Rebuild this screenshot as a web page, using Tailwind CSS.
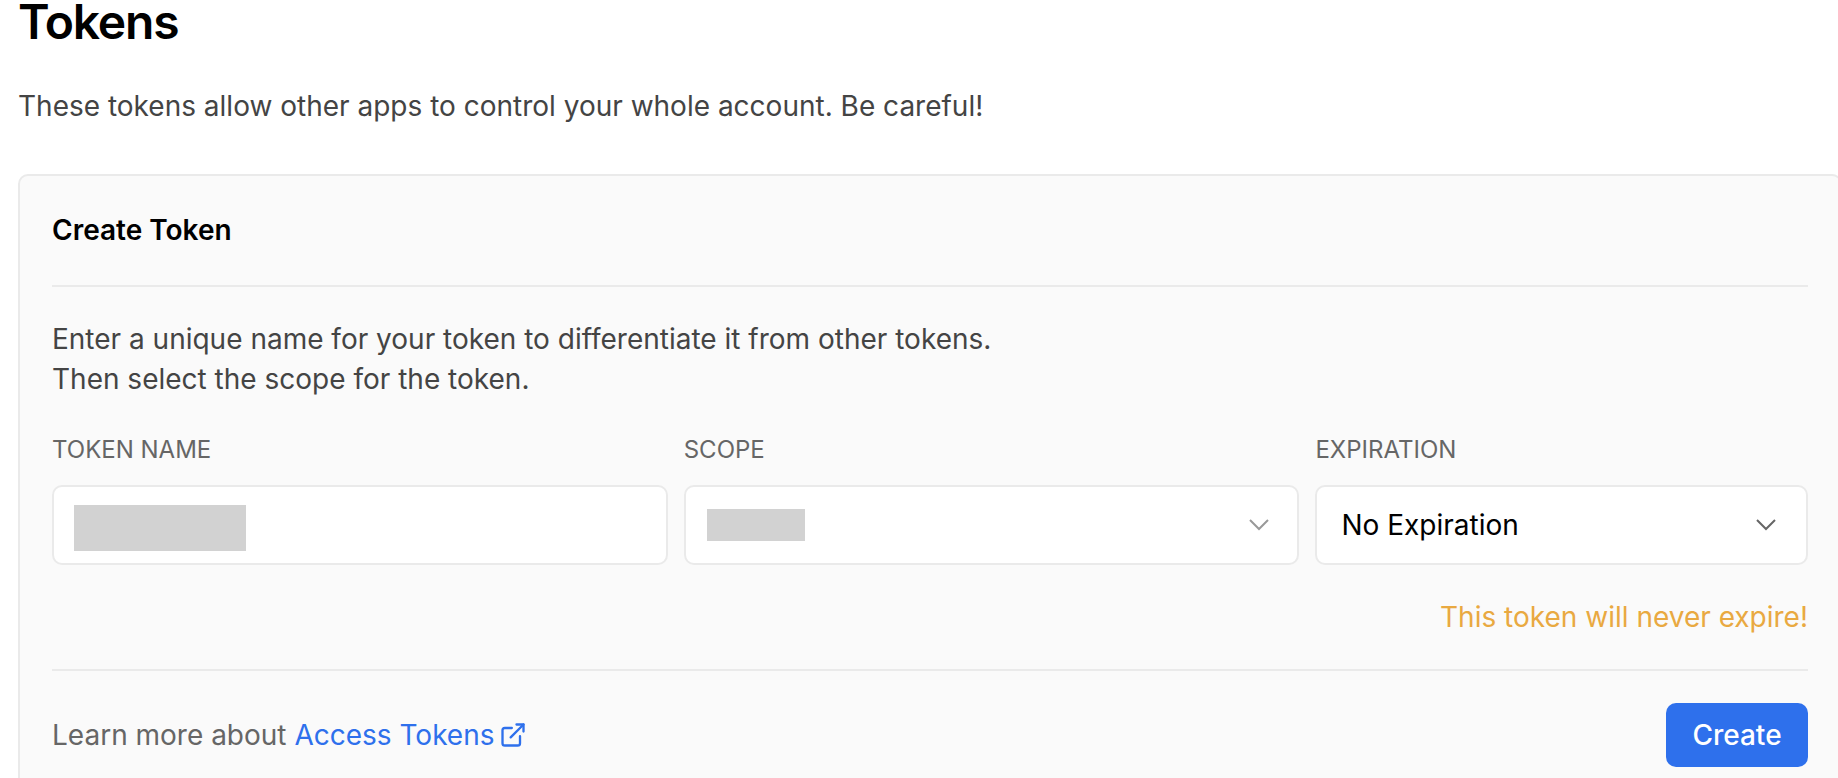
<!DOCTYPE html>
<html lang="en">
<head>
	<meta charset="UTF-8">
	<meta name="viewport" content="width=device-width, initial-scale=1.0">
	<title>Tokens</title>
	<script src="https://cdn.jsdelivr.net/npm/@tailwindcss/browser@4"></script>
</head>
<body class="bg-white font-['Inter',sans-serif] text-[28px] text-[#444] overflow-x-hidden">

	<main class="pl-[18px]">
		<h1 class="text-5xl leading-11 font-semibold tracking-tight text-black">Tokens</h1>
		<p class="mt-10 leading-[45px]">These tokens allow other apps to control your whole account. Be careful!</p>

		<!-- the card runs slightly past the right edge -->
		<form class="mt-[45px] -mr-1 px-8 border-2 border-[#eaeaea] rounded-[10px] bg-[#fafafa]">
			<h2 class="py-8 leading-[45px] font-semibold text-black border-b-2 border-[#eaeaea]">Create Token</h2>

			<div class="py-8 leading-10 border-b-2 border-[#eaeaea]">
				<p>Enter a unique name for your token to differentiate it from other tokens.<br>Then select the scope for the token.</p>

				<div class="mt-8 grid grid-cols-[5fr_5fr_4fr] gap-4">
					<div>
						<label for="name" class="block mb-4 text-2xl leading-[38px] text-[#666] uppercase">Token name</label>
						<div class="relative">
							<input id="name" type="text" class="block w-full h-20 px-6 text-black bg-white border-2 border-[#eaeaea] rounded-[10px]">
							<span class="absolute left-[22px] top-5 w-43 h-[46px] bg-[#d2d2d2]"></span>
						</div>
					</div>
					<div>
						<label for="scope" class="block mb-4 text-2xl leading-[38px] text-[#666] uppercase">Scope</label>
						<div class="relative">
							<select id="scope" class="block w-full h-20 px-6 text-black bg-white border-2 border-[#eaeaea] rounded-[10px] appearance-none">
								<option></option>
							</select>
							<span class="absolute left-[23px] top-6 w-[98px] h-8 bg-[#d2d2d2]"></span>
							<svg class="absolute right-7 top-7 size-6 text-[#999] pointer-events-none" viewBox="0 0 24 24" fill="none" stroke="currentColor" stroke-width="2"><path d="M3 7l9 9 9-9"/></svg>
						</div>
					</div>
					<div>
						<label for="expiration" class="block mb-4 text-2xl leading-[38px] text-[#666] uppercase">Expiration</label>
						<div class="relative">
							<select id="expiration" class="block w-full h-20 px-6 text-black bg-white border-2 border-[#eaeaea] rounded-[10px] appearance-none">
								<option>No Expiration</option>
							</select>
							<svg class="absolute right-[30px] top-7 size-6 text-[#666] pointer-events-none" viewBox="0 0 24 24" fill="none" stroke="currentColor" stroke-width="2"><path d="M3 7l9 9 9-9"/></svg>
						</div>
					</div>
				</div>

				<p class="mt-8 text-right text-[#e9a941]">This token will never expire!</p>
			</div>

			<div class="py-8 flex items-center justify-between">
				<p class="text-[#666]">
					Learn more about
					<a href="#" class="inline-flex items-center gap-1 text-[#2e70ec]">Access Tokens
						<svg class="size-7" viewBox="0 0 24 24" fill="none" stroke="currentColor" stroke-width="2" stroke-linecap="round" stroke-linejoin="round"><path d="M18 13v6a2 2 0 01-2 2H5a2 2 0 01-2-2V8a2 2 0 012-2h6"/><path d="M15 3h6v6"/><path d="M10 14L21 3"/></svg>
					</a>
				</p>
				<button type="button" class="w-[142px] h-16 font-medium text-white bg-[#2e70ec] rounded-[10px] cursor-pointer">Create</button>
			</div>
		</form>
	</main>

</body>
</html>
